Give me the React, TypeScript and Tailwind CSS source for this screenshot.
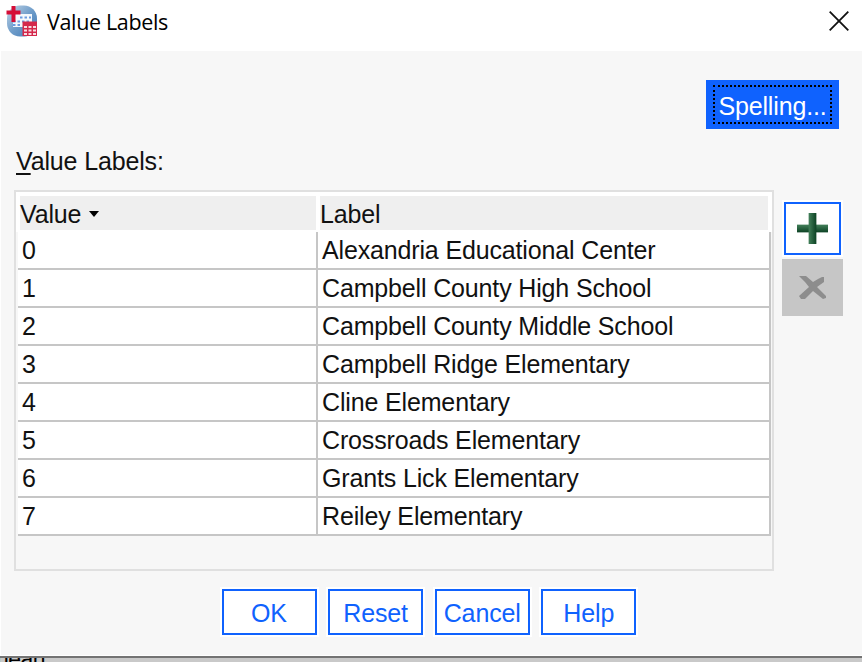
const rows = [
  'Alexandria Educational Center',
  'Campbell County High School',
  'Campbell County Middle School',
  'Campbell Ridge Elementary',
  'Cline Elementary',
  'Crossroads Elementary',
  'Grants Lick Elementary',
  'Reiley Elementary',
];

function AppIcon() {
  return (
    <svg width="34" height="34" viewBox="0 0 34 34" className="shrink-0">
      <defs>
        <linearGradient id="globe" x1="0" y1="0" x2="1" y2="1">
          <stop offset="0" stopColor="#c3d5e6" />
          <stop offset="0.5" stopColor="#6f9dca" />
          <stop offset="1" stopColor="#3f78b4" />
        </linearGradient>
      </defs>
      <rect x="2" y="0.500" width="30" height="31" rx="13" fill="url(#globe)" />
      <path d="M8 9h19v13H8z" fill="#f4f8fc" />
      <path d="M15 12.500h11M8 16.500h18M8 20h9" stroke="#6a9be0" strokeWidth="2" strokeDasharray="2.500 2" />
      <path d="M8.500 1v16M1.500 7.500h14" stroke="#d50d36" strokeWidth="4" />
      <path d="M17.500 16.500H32V31H17.500z" fill="#d4284b" />
      <path d="M19 21h3v2h-3zM23.500 21h3v2h-3zM28 21h3v2h-3zM19 24.500h3v2h-3zM23.500 24.500h3v2h-3zM28 24.500h3v2h-3zM19 28h3v2h-3zM23.500 28h3v2h-3zM28 28h3v2h-3z" fill="#f8dbe2" />
    </svg>
  );
}

function DialogButton({ label }: { label: string }) {
  return (
    <button className="h-[46px] w-[95px] border-2 border-[#0f62fe] bg-white pt-[2px] text-[#0f62fe] outline-2 outline-white">
      {label}
    </button>
  );
}

export default function App() {
  return (
    <div className="flex h-[662px] w-[862px] flex-col overflow-hidden bg-white font-['Liberation_Sans',Arial,sans-serif] text-[25px] leading-[28px] tracking-[-0.15px] text-[#111]">
      <header className="flex h-[51px] shrink-0 items-start justify-between pt-[5px] pr-[13px] pl-[5px]">
        <div className="flex gap-[8px]">
          <AppIcon />
          <h1 className="pt-[3px] font-['Open_Sans','Noto_Sans',sans-serif] text-[21.500px] leading-[28px] tracking-[-0.350px] text-black">Value Labels</h1>
        </div>
        <svg width="20" height="20" viewBox="0 0 20 20" className="mt-[6px]">
          <path d="M0.700 0.700 19.300 19.300M19.300 0.700 0.700 19.300" stroke="#111" strokeWidth="1.800" />
        </svg>
      </header>

      <main className="ml-px flex h-[604px] shrink-0 flex-col bg-[#f7f7f7] pt-[29px] pl-[13px]">
        <button className="ml-[692px] h-[49px] w-[133px] bg-[#0f62fe] px-[7px] py-[5px] text-white">
          <span className="flex h-full items-center justify-center border-2 border-dotted border-black pt-[2px] whitespace-nowrap">Spelling...</span>
        </button>
        <div className="mt-[18px] ml-[2px] h-[28px]">
          <span className="underline decoration-2 underline-offset-[3px]">V</span>alue Labels:
        </div>
        <div className="mt-[15px] flex">
          <section className="h-[381px] w-[760px] border-2 border-[#e0e0e0]">
            <div className="flex h-[40px] gap-[4px] bg-white pt-[4px] pr-[4px] pb-[2px] pl-[4px]">
              <div className="flex w-[296px] items-center gap-[8px] bg-[#efefef] pt-[2px]">
                Value
                <svg width="10" height="6" viewBox="0 0 10 6"><path d="M0 0h10L5 6z" fill="#000" /></svg>
              </div>
              <div className="flex flex-1 items-center bg-[#efefef] pt-[2px]">Label</div>
            </div>
            <div className="ml-[2px] w-[753px] bg-white">
              {rows.map((label, value) => (
                <div key={label} className="flex h-[38px] border-b-2 border-[#c6c6c6]">
                  <div className="w-[300px] border-r-2 border-[#c6c6c6] pt-[4px] pl-[4px]">{value}</div>
                  <div className="flex-1 border-r-2 border-[#c6c6c6] pt-[4px] pl-[4px]">{label}</div>
                </div>
              ))}
            </div>
          </section>
          <div className="ml-[8px] flex flex-col items-center pt-[12px]">
            <button className="flex h-[53px] w-[57px] items-center justify-center border-2 border-[#0f62fe] bg-white outline-2 outline-white">
              <svg width="31" height="31" viewBox="0 0 32 32">
                <defs>
                  <linearGradient id="plusAcross" x1="0" y1="0" x2="1" y2="0">
                    <stop offset="0" stopColor="#43805a" />
                    <stop offset="1" stopColor="#0c4224" />
                  </linearGradient>
                  <linearGradient id="plusDown" x1="0" y1="0" x2="0" y2="1">
                    <stop offset="0" stopColor="#43805a" />
                    <stop offset="1" stopColor="#0c4224" />
                  </linearGradient>
                </defs>
                <path d="M0 12h32v8H0z" fill="url(#plusDown)" />
                <path d="M12 0h8v32h-8z" fill="url(#plusAcross)" />
              </svg>
            </button>
            <button className="mt-[4px] flex h-[57px] w-[61px] items-center justify-center bg-[#c6c6c6]">
              <svg width="28" height="24" viewBox="0 0 28 24">
                <path d="M0 0h7l7 6 5-3 4-2h2v5l-7 5 9 9v2l-3 1-10-8-8 8H2l-2-3 10-9-4-5z" fill="#8d8d8d" />
              </svg>
            </button>
          </div>
        </div>
        <footer className="mt-[18px] ml-[207.500px] flex gap-[11.600px]">
          {['OK', 'Reset', 'Cancel', 'Help'].map((label) => (
            <DialogButton key={label} label={label} />
          ))}
        </footer>
      </main>
      <div className="h-px shrink-0 bg-white" />
      <div className="h-[6px] shrink-0 overflow-hidden border-t-2 border-[#737373] bg-[#c9c9c9]">
        <span className="-mt-[9px] ml-[-4px] block text-[23px] leading-[20px] tracking-[-0.5px] text-black">nean</span>
      </div>
    </div>
  );
}
